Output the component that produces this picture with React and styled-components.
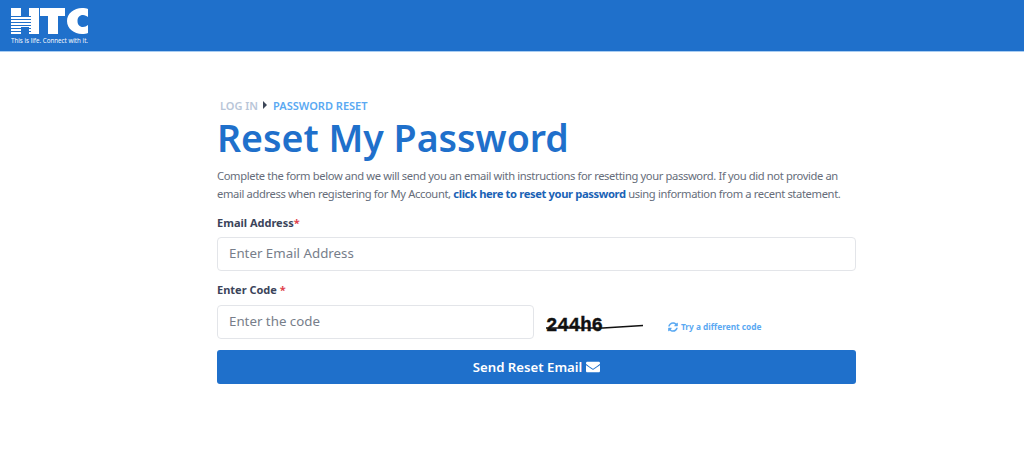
import React from "react"
import styled, { createGlobalStyle } from "styled-components"
import { FaEnvelope, FaSyncAlt } from "react-icons/fa"

const Global = createGlobalStyle`
  html, body { margin: 0; padding: 0; background: #fff; }
  body { font-family: "Noto Sans", "Open Sans", sans-serif; }
  * { box-sizing: border-box; }
`

const Header = styled.header`
  height: 52px;
  background: #1f70cb;
  border-bottom: 1px solid #a9cdf2;
  padding: 7px 0 0 11px;
`

const Main = styled.main`
  width: 639px;
  margin-left: 217px;
  padding-top: 46px;
`

const Crumbs = styled.div`
  display: flex;
  align-items: center;
  height: 14px;
  margin-left: 3px;
  font-size: 11px;
  font-weight: 600;
`

const Crumb = styled.span`
  color: ${(p) => (p.$active ? "#5aa9f2" : "#b9c6d8")};
`

const Arrow = styled.span`
  width: 0;
  height: 0;
  margin: 0 6px 0 5px;
  border-left: 4px solid #3c4658;
  border-top: 4px solid transparent;
  border-bottom: 4px solid transparent;
`

const Title = styled.h1`
  margin: 0;
  height: 49px;
  padding-top: 3px;
  font-size: 37.5px;
  line-height: 46px;
  font-weight: 600;
  color: #1f70cb;
`

const Intro = styled.p`
  margin: 6px 0 0;
  font-size: 11.2px;
  letter-spacing: -0.37px;
  line-height: 18px;
  color: #666d7a;
  white-space: nowrap;

  a {
    color: #1a62b5;
    font-weight: 700;
    text-decoration: none;
  }
`

const Label = styled.label`
  display: block;
  height: 16px;
  font-size: 11px;
  line-height: 16px;
  font-weight: 700;
  color: #3b445a;
  margin-top: ${(p) => p.$top}px;
  margin-bottom: ${(p) => p.$bottom}px;

  span {
    color: #e0404c;
  }
`

const Input = styled.input`
  display: block;
  width: ${(p) => p.$width || "100%"};
  height: 34px;
  padding: 0 11px 2px;
  border: 1px solid #e3e5e9;
  border-radius: 4px;
  background: #fff;
  font-family: inherit;
  font-size: 13.3px;
  color: #333c50;
  outline: none;

  &::placeholder {
    color: #777e8a;
    opacity: 1;
  }
`

const CodeRow = styled.div`
  display: flex;
  align-items: center;
`

const Captcha = styled.div`
  width: 110px;
  margin-left: 12px;
  flex: none;
  line-height: 0;
`

const Retry = styled.a`
  display: flex;
  align-items: center;
  gap: 3px;
  margin: 9px 0 0 12px;
  font-size: 8.3px;
  font-weight: 700;
  color: #5aa9f2;
  text-decoration: none;

  svg {
    font-size: 10px;
  }
`

const Submit = styled.button`
  display: flex;
  align-items: center;
  justify-content: center;
  gap: 4px;
  width: 100%;
  height: 34px;
  margin-top: 11px;
  border: none;
  border-radius: 3px;
  background: #1f70cb;
  color: #fff;
  font-family: inherit;
  font-size: 13.2px;
  font-weight: 600;

  svg {
    font-size: 14px;
  }
`

const stripes = [9, 12, 15, 18, 21, 24]

const Logo = () => (
  <svg width="120" height="44" viewBox="0 0 120 44" style={{ display: "block" }}>
    <path d="M0 1h10v8h8V1h10v26H18v-7h-8v7H0z" fill="#fff" />
    {stripes.map((y) => (
      <rect key={y} x="0" y={y} width="20" height="1" fill="#1f70cb" />
    ))}
    <path d="M29 1h25v8h-7v18H37V9h-8z" fill="#fff" />
    <path
      d="M77 10c-1.500-1-3-2-5-2-3.500 0-5.500 2.500-5.500 6s2 6 5.500 6c2 0 3.500-1 5-2v8c-1.500.6-3.500 1-6 1-8 0-15-5.500-15-13S63 1 71 1c2.500 0 4.500.4 6 1z"
      fill="#fff"
    />
    <text x="0" y="35.500" fontSize="7" fill="#fff" fontFamily="'Open Sans', sans-serif" textLength="77" lengthAdjust="spacingAndGlyphs">
      This is life. Connect with it.
    </text>
  </svg>
)

const CaptchaImage = () => (
  <svg width="100" height="32" viewBox="0 0 100 32">
    <text x="0" y="25" fontSize="20" fontWeight="700" fill="#111" stroke="#111" strokeWidth="0.400" fontFamily="'Liberation Mono', monospace" textLength="57" lengthAdjust="spacingAndGlyphs">
      244h6
    </text>
    <path d="M0 22 L57 22 L97 19.500" stroke="#111" strokeWidth="1.500" fill="none" />
  </svg>
)

export default function App() {
  return (
    <>
      <Global />
      <Header>
        <Logo />
      </Header>
      <Main>
        <Crumbs>
          <Crumb>LOG IN</Crumb>
          <Arrow />
          <Crumb $active>PASSWORD RESET</Crumb>
        </Crumbs>
        <Title>Reset My Password</Title>
        <Intro>
          Complete the form below and we will send you an email with instructions for resetting your password. If you did not provide an
          <br />
          email address when registering for My Account, <a href="#reset">click here to reset your password</a> using information from a recent statement.
        </Intro>
        <form>
          <Label $top={12} $bottom={6}>
            Email Address<span>*</span>
          </Label>
          <Input placeholder="Enter Email Address" />
          <Label $top={11} $bottom={7}>
            Enter Code <span>*</span>
          </Label>
          <CodeRow>
            <Input $width="317px" placeholder="Enter the code" />
            <Captcha>
              <CaptchaImage />
            </Captcha>
            <Retry href="#code">
              <FaSyncAlt />
              Try a different code
            </Retry>
          </CodeRow>
          <Submit type="button">
            Send Reset Email <FaEnvelope />
          </Submit>
        </form>
      </Main>
    </>
  )
}
